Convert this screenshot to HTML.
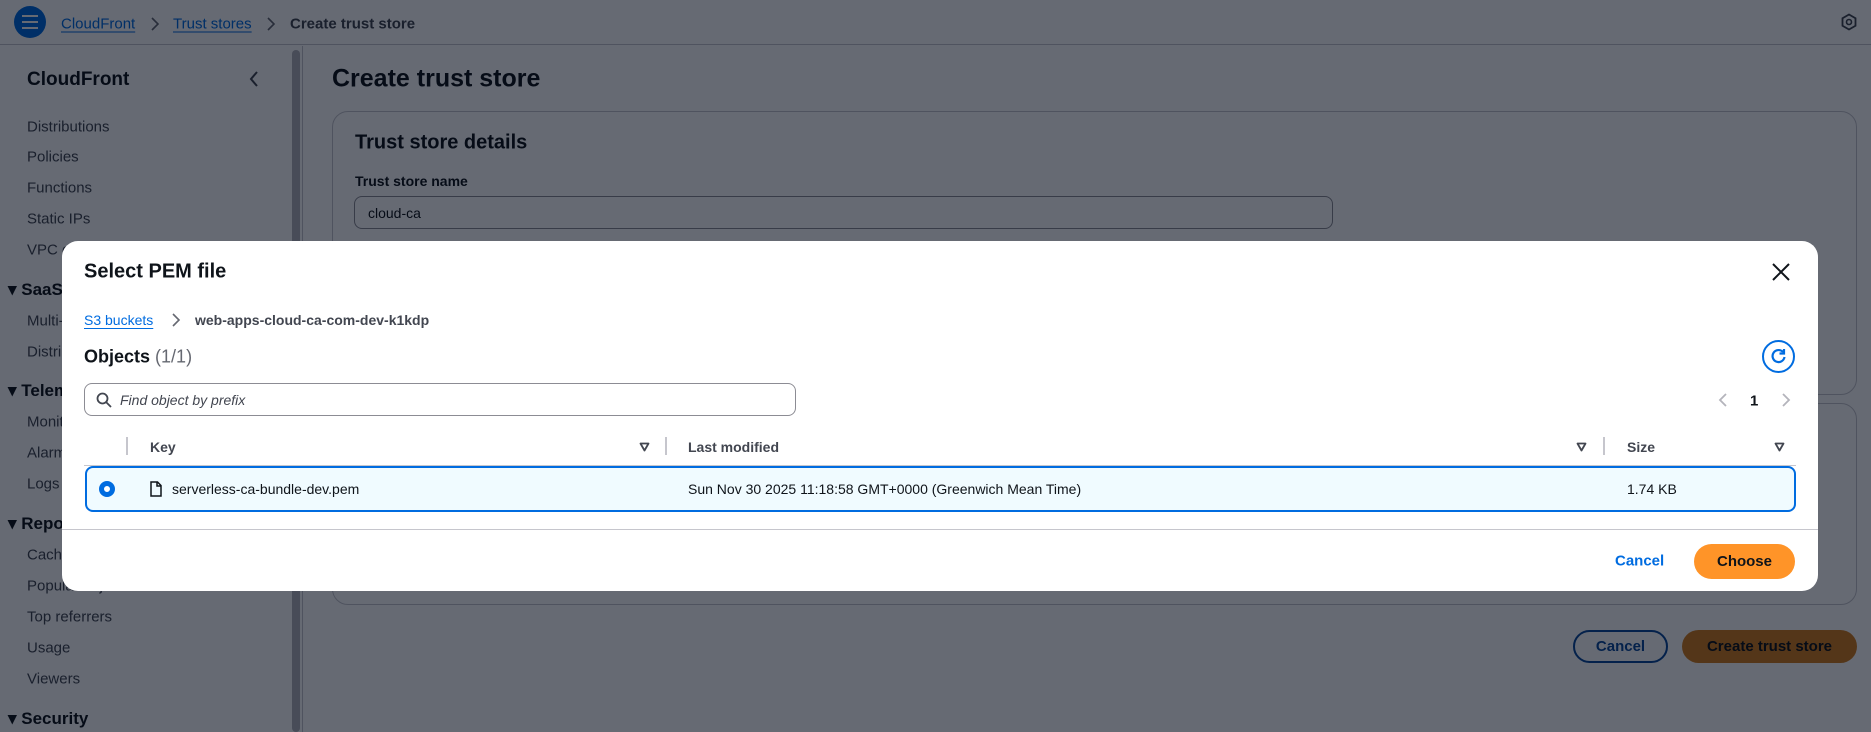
<!DOCTYPE html>
<html><head><meta charset="utf-8"><style>
*{box-sizing:border-box;margin:0;padding:0}
body{width:1871px;height:732px;overflow:hidden;position:relative;background:#fff;font-family:"Liberation Sans",Arial,sans-serif;color:#0f141a;font-size:14px}
.a{position:absolute;white-space:nowrap}
.lnk{color:#006ce0;text-decoration:underline;text-underline-offset:3px}
.side div{position:absolute;left:27px;font-size:15px;color:#424650;transform:translateY(-50%)}
.side .h{left:8px;font-weight:bold;font-size:17px;color:#0f141a}
.ov{position:absolute;inset:0;background:rgba(0,7,22,0.6)}
.m{position:absolute;left:62px;top:241px;width:1756px;height:350px;background:#fff;border-radius:16px}
.vc{transform:translateY(-50%)}
</style></head><body>
<!-- header -->
<div class="a" style="left:0;top:0;width:1871px;height:45px;border-bottom:1px solid #c6c6cd"></div>
<div class="a" style="left:14px;top:6px;width:32px;height:32px;border-radius:50%;background:#006ce0"></div>
<div class="a" style="left:22px;top:15px;width:16px;height:2px;background:#fff;box-shadow:0 6px 0 #fff,0 12px 0 #fff"></div>
<div class="a lnk vc" style="left:61px;top:24px;font-size:15px">CloudFront</div>
<svg class="a" style="left:150px;top:16px" width="10" height="16" viewBox="0 0 10 16"><path d="M2 2L8 8L2 14" fill="none" stroke="#656871" stroke-width="1.6"/></svg>
<div class="a lnk vc" style="left:173px;top:24px;font-size:15px">Trust stores</div>
<svg class="a" style="left:266px;top:16px" width="10" height="16" viewBox="0 0 10 16"><path d="M2 2L8 8L2 14" fill="none" stroke="#656871" stroke-width="1.6"/></svg>
<div class="a vc" style="left:290px;top:24px;font-size:15px;font-weight:bold;color:#424650">Create trust store</div>
<svg class="a" style="left:1840px;top:13px" width="18" height="18" viewBox="0 0 18 18"><path d="M9 1.5L15.5 5.25V12.75L9 16.5L2.5 12.75V5.25Z" fill="none" stroke="#424650" stroke-width="1.8"/><circle cx="9" cy="9" r="2.5" fill="none" stroke="#424650" stroke-width="1.6"/></svg>
<!-- sidebar -->
<div class="a" style="left:302px;top:46px;width:1px;height:686px;background:#c6c6cd"></div>
<div class="a" style="left:292px;top:50px;width:8px;height:682px;background:#b4b4bb;border-radius:4px"></div>
<svg class="a" style="left:248px;top:70px" width="12" height="18" viewBox="0 0 12 18"><path d="M9 2L3 9L9 16" fill="none" stroke="#424650" stroke-width="2"/></svg>
<div class="side">
<div class="h" style="left:27px;top:80px;font-size:19px">CloudFront</div>
<div style="top:127px">Distributions</div><div style="top:157px">Policies</div><div style="top:188px">Functions</div><div style="top:219px">Static IPs</div><div style="top:250px">VPC origins</div>
<div class="h" style="top:290px">▾ SaaS</div><div style="top:321px">Multi-tenant</div><div style="top:352px">Distribution tenants</div>
<div class="h" style="top:391px">▾ Telemetry</div><div style="top:422px">Monitoring</div><div style="top:453px">Alarms</div><div style="top:484px">Logs</div>
<div class="h" style="top:524px">▾ Reports &amp; analytics</div><div style="top:555px">Cache statistics</div><div style="top:586px">Popular objects</div><div style="top:617px">Top referrers</div><div style="top:648px">Usage</div><div style="top:679px">Viewers</div>
<div class="h" style="top:719px">▾ Security</div>
</div>
<!-- main -->
<div class="a vc" style="left:332px;top:79px;font-size:25px;font-weight:bold">Create trust store</div>
<div class="a" style="left:332px;top:111px;width:1525px;height:284px;border:1px solid #c6c6cd;border-radius:16px"></div>
<div class="a vc" style="left:355px;top:143px;font-size:20px;font-weight:bold">Trust store details</div>
<div class="a vc" style="left:355px;top:181px;font-size:14px;font-weight:bold">Trust store name</div>
<div class="a" style="left:354px;top:196px;width:979px;height:33px;border:1px solid #8c8c94;border-radius:8px"></div>
<div class="a vc" style="left:368px;top:213px;font-size:14px">cloud-ca</div>
<div class="a" style="left:332px;top:403px;width:1525px;height:202px;border:1px solid #c6c6cd;border-radius:16px"></div>
<div class="a" style="left:1573px;top:630px;width:95px;height:33px;border:2px solid #0a4a9c;border-radius:20px;color:#0a4a9c;font-weight:bold;font-size:15px;text-align:center;line-height:29px">Cancel</div>
<div class="a" style="left:1682px;top:630px;width:175px;height:33px;background:#d27d1e;border-radius:20px;color:#0f141a;font-weight:bold;font-size:15px;text-align:center;line-height:33px">Create trust store</div>
<div class="ov"></div>
<!-- modal -->
<div class="m">
<div class="a vc" style="left:22px;top:31px;font-size:20px;font-weight:bold">Select PEM file</div>
<svg class="a" style="left:1709px;top:21px" width="20" height="20" viewBox="0 0 20 20"><path d="M2 2L18 18M18 2L2 18" stroke="#0f141a" stroke-width="2"/></svg>
<div class="a lnk vc" style="left:22px;top:79px;font-size:14px">S3 buckets</div>
<svg class="a" style="left:109px;top:71px" width="10" height="16" viewBox="0 0 10 16"><path d="M2 2L8 8L2 14" fill="none" stroke="#656871" stroke-width="1.6"/></svg>
<div class="a vc" style="left:133px;top:79px;font-size:14px;font-weight:bold;color:#424650">web-apps-cloud-ca-com-dev-k1kdp</div>
<div class="a vc" style="left:22px;top:116px;font-size:18px"><b>Objects</b> <span style="color:#656871">(1/1)</span></div>
<div class="a" style="left:1700px;top:99px;width:33px;height:33px;border:2px solid #006ce0;border-radius:50%"></div>
<svg class="a" style="left:1706px;top:105px" width="21" height="21" viewBox="0 0 21 21"><path d="M15 6A6 6 0 1 0 16.5 11" fill="none" stroke="#006ce0" stroke-width="2.2"/><path d="M16 3V7.5H11.5" fill="none" stroke="#006ce0" stroke-width="2.2"/></svg>
<div class="a" style="left:22px;top:142px;width:712px;height:33px;border:1px solid #8c8c94;border-radius:8px"></div>
<svg class="a" style="left:34px;top:151px" width="16" height="16" viewBox="0 0 16 16"><circle cx="6.5" cy="6.5" r="5" fill="none" stroke="#424650" stroke-width="1.8"/><path d="M10 10L15 15" stroke="#424650" stroke-width="1.8"/></svg>
<div class="a vc" style="left:58px;top:159px;font-style:italic;color:#424650;font-size:14px">Find object by prefix</div>
<svg class="a" style="left:1656px;top:151px" width="10" height="16" viewBox="0 0 10 16"><path d="M8 2L2 8L8 14" fill="none" stroke="#b4b4bb" stroke-width="1.8"/></svg>
<div class="a vc" style="left:1688px;top:160px;font-weight:bold;font-size:15px">1</div>
<svg class="a" style="left:1719px;top:151px" width="10" height="16" viewBox="0 0 10 16"><path d="M2 2L8 8L2 14" fill="none" stroke="#b4b4bb" stroke-width="1.8"/></svg>
<div class="a" style="left:64px;top:196px;width:2px;height:18px;background:#c6c6cd"></div>
<div class="a" style="left:603px;top:196px;width:2px;height:18px;background:#c6c6cd"></div>
<div class="a" style="left:1541px;top:196px;width:2px;height:18px;background:#c6c6cd"></div>
<div class="a vc" style="left:88px;top:206px;font-weight:bold;font-size:14px;color:#424650">Key</div>
<div class="a vc" style="left:626px;top:206px;font-weight:bold;font-size:14px;color:#424650">Last modified</div>
<div class="a vc" style="left:1565px;top:206px;font-weight:bold;font-size:14px;color:#424650">Size</div>
<svg class="a" style="left:577px;top:201px" width="11" height="10" viewBox="0 0 11 10"><path d="M1.5 1.5H9.5L5.5 8.5Z" fill="none" stroke="#424650" stroke-width="1.8" stroke-linejoin="round"/></svg>
<svg class="a" style="left:1514px;top:201px" width="11" height="10" viewBox="0 0 11 10"><path d="M1.5 1.5H9.5L5.5 8.5Z" fill="none" stroke="#424650" stroke-width="1.8" stroke-linejoin="round"/></svg>
<svg class="a" style="left:1712px;top:201px" width="11" height="10" viewBox="0 0 11 10"><path d="M1.5 1.5H9.5L5.5 8.5Z" fill="none" stroke="#424650" stroke-width="1.8" stroke-linejoin="round"/></svg>
<div class="a" style="left:22px;top:224px;width:1712px;height:1px;background:#c6c6cd"></div>
<div class="a" style="left:23px;top:225px;width:1711px;height:46px;background:#f0fbff;border:2px solid #006ce0;border-radius:8px"></div>
<div class="a" style="left:37px;top:240px;width:16px;height:16px;border-radius:50%;border:5px solid #006ce0;background:#fff"></div>
<svg class="a" style="left:88px;top:240px" width="12" height="16" viewBox="0 0 12 16"><path d="M1 1H7.5L11 4.5V15H1Z M7 1V5H11" fill="none" stroke="#0f141a" stroke-width="1.5"/></svg>
<div class="a vc" style="left:110px;top:248px;font-size:14px">serverless-ca-bundle-dev.pem</div>
<div class="a vc" style="left:626px;top:248px;font-size:14px">Sun Nov 30 2025 11:18:58 GMT+0000 (Greenwich Mean Time)</div>
<div class="a vc" style="left:1565px;top:248px;font-size:14px">1.74 KB</div>
<div class="a" style="left:0;top:288px;width:1756px;height:1px;background:#c6c6cd"></div>
<div class="a vc" style="left:1553px;top:320px;font-weight:bold;color:#006ce0;font-size:15px">Cancel</div>
<div class="a" style="left:1632px;top:303px;width:101px;height:35px;background:#ff9428;border-radius:20px;font-weight:bold;font-size:15px;text-align:center;line-height:35px">Choose</div>
</div>
</body></html>
